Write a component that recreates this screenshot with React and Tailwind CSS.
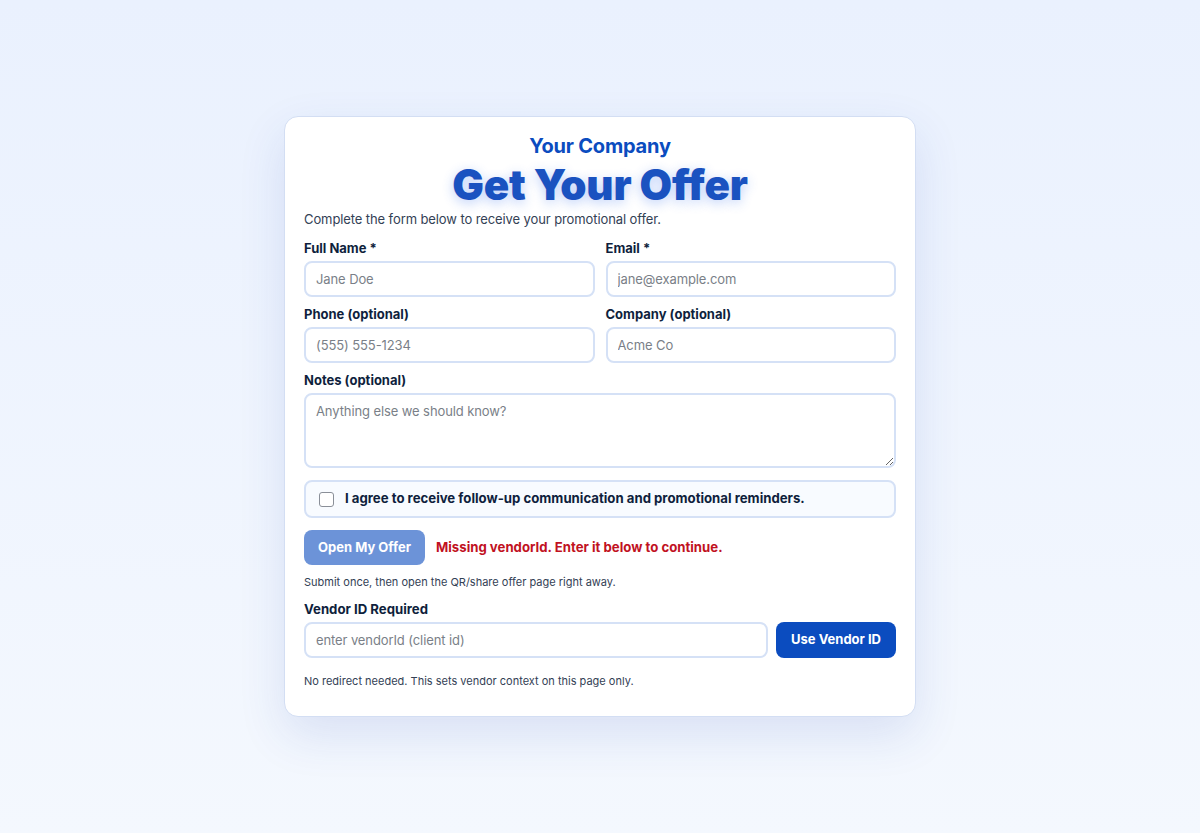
import { useState } from 'react';

const inputCls =
  'w-full h-9 rounded-lg border-2 border-[#d5e1f6] bg-white px-[10px] text-[13px] tracking-[-0.1px] text-[#0f172a] placeholder:text-[#7a7f88] outline-none';

function Field({ label, children }) {
  return (
    <label className="flex flex-col">
      <span className="mb-[3px] text-[13px] leading-5 font-bold text-[#0f1f3d]">{label}</span>
      {children}
    </label>
  );
}

export default function App() {
  const [agree, setAgree] = useState(false);
  const [vendor, setVendor] = useState('');

  return (
    <div
      className="min-h-[833px] flex justify-center bg-gradient-to-b from-[#eaf1fe] to-[#f4f8fe] pt-[116px]"
      style={{ fontFamily: 'Inter, "Noto Sans", sans-serif' }}
    >
      <div className="w-[632px] h-[601px] rounded-[14px] border border-[#d3def3] bg-white px-[19px] pt-[17px] shadow-[0_18px_48px_rgba(30,64,175,0.12)]">
        <div className="text-center text-[20px] leading-6 font-bold text-[#0b4cbf] tracking-[-0.2px]">Your Company</div>
        <h1 className="text-center text-[42px] leading-[54px] font-black text-[#1a52c0] tracking-[-0.2px] [text-shadow:0_3px_12px_rgba(37,99,235,0.3)]">
          Get Your Offer
        </h1>
        <p className="-mt-[3px] text-[13px] leading-5 tracking-[-0.1px] text-[#334155]">
          Complete the form below to receive your promotional offer.
        </p>

        <div className="mt-[9px] grid grid-cols-2 gap-x-[11px] gap-y-[7px]">
          <Field label="Full Name *">
            <input className={inputCls} placeholder="Jane Doe" />
          </Field>
          <Field label="Email *">
            <input className={inputCls} placeholder="jane@example.com" />
          </Field>
          <Field label="Phone (optional)">
            <input className={inputCls} placeholder="(555) 555-1234" />
          </Field>
          <Field label="Company (optional)">
            <input className={inputCls} placeholder="Acme Co" />
          </Field>
          <div className="col-span-2">
            <Field label="Notes (optional)">
              <textarea
                className="w-full h-[75px] rounded-lg border-2 border-[#d5e1f6] bg-white px-[10px] py-[7px] text-[13px] tracking-[-0.1px] text-[#0f172a] placeholder:text-[#7a7f88] outline-none"
                placeholder="Anything else we should know?"
              />
            </Field>
          </div>
        </div>

        <label className="mt-[12px] flex h-[38px] items-center gap-[11px] rounded-lg border-2 border-[#d5e1f6] bg-[#f8fbff] px-[13px]">
          <input
            type="checkbox"
            checked={agree}
            onChange={(e) => setAgree(e.target.checked)}
            className="h-[15px] w-[15px] appearance-none rounded-[3px] border border-[#8a8f98] bg-white"
          />
          <span className="text-[13.2px] font-bold text-[#0f1f3d]">
            I agree to receive follow-up communication and promotional reminders.
          </span>
        </label>

        <div className="mt-3 flex items-center gap-[11px]">
          <button
            type="button"
            disabled
            className="h-[35px] w-[121px] rounded-lg bg-[#0b4cbf] opacity-60 text-[13px] font-bold text-white"
          >
            Open My Offer
          </button>
          <span className="text-[13.2px] font-bold text-[#c1121f]">
            Missing vendorId. Enter it below to continue.
          </span>
        </div>

        <p className="mt-[9px] text-[11px] leading-4 text-[#334155]">
          Submit once, then open the QR/share offer page right away.
        </p>

        <div className="mt-[9px] text-[13.2px] leading-5 font-bold text-[#0f1f3d]">Vendor ID Required</div>
        <div className="mt-[3px] flex gap-2">
          <input
            className={inputCls + ' flex-1'}
            placeholder="enter vendorId (client id)"
            value={vendor}
            onChange={(e) => setVendor(e.target.value)}
          />
          <button
            type="button"
            className="h-9 w-[120px] shrink-0 rounded-lg bg-[#0b4cbf] text-[13px] font-bold text-white"
          >
            Use Vendor ID
          </button>
        </div>
        <p className="mt-[15px] text-[11px] leading-4 text-[#334155]">
          No redirect needed. This sets vendor context on this page only.
        </p>
      </div>
    </div>
  );
}
